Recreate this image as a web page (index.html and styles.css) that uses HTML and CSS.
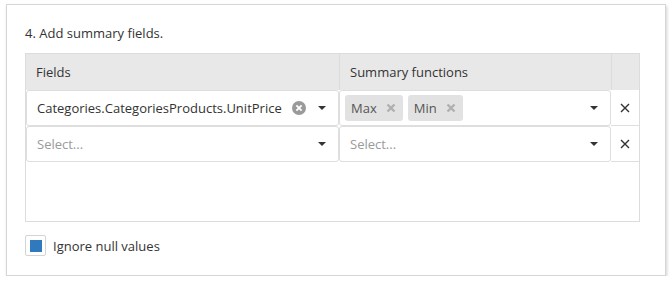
FILE: index.html
```html
<!DOCTYPE html>
<html lang="en">
<head>
    <meta charset="UTF-8">
    <title>Add summary fields</title>
    <link rel="stylesheet" href="styles.css">
</head>
<body>
    <div class="card">
        <div class="step-title">4. Add summary fields.</div>

        <div class="grid">
            <div class="grid-head">
                <div class="head-cell">Fields</div>
                <div class="head-cell">Summary functions</div>
                <div class="head-cell"></div>
            </div>

            <div class="grid-row">
                <div class="editor">
                    <span class="value">Categories.CategoriesProducts.UnitPrice</span>
                    <span class="clear-btn">
                        <svg width="14" height="14" viewBox="0 0 14 14"><circle cx="7" cy="7" r="7" fill="#9a9a9a"/><path d="M4.4 4.4 L9.6 9.6 M9.6 4.4 L4.4 9.6" stroke="#fff" stroke-width="1.8"/></svg>
                    </span>
                    <span class="caret"></span>
                </div>
                <div class="editor tags">
                    <span class="tag">Max <svg class="tag-x" width="10" height="10" viewBox="0 0 10 10"><path d="M1.5 1.5 L8.5 8.5 M8.5 1.5 L1.5 8.5" stroke="#b0b0b0" stroke-width="2.4"/></svg></span>
                    <span class="tag">Min <svg class="tag-x" width="10" height="10" viewBox="0 0 10 10"><path d="M1.5 1.5 L8.5 8.5 M8.5 1.5 L1.5 8.5" stroke="#b0b0b0" stroke-width="2.4"/></svg></span>
                    <span class="spacer"></span>
                    <span class="caret"></span>
                </div>
                <div class="remove-cell">
                    <svg width="10" height="10" viewBox="0 0 10 10"><path d="M1 1 L9 9 M9 1 L1 9" stroke="#333" stroke-width="1.4"/></svg>
                </div>
            </div>

            <div class="grid-row">
                <div class="editor">
                    <span class="placeholder">Select...</span>
                    <span class="caret"></span>
                </div>
                <div class="editor">
                    <span class="placeholder">Select...</span>
                    <span class="caret"></span>
                </div>
                <div class="remove-cell">
                    <svg width="10" height="10" viewBox="0 0 10 10"><path d="M1 1 L9 9 M9 1 L1 9" stroke="#333" stroke-width="1.4"/></svg>
                </div>
            </div>

            <div class="grid-empty"></div>
        </div>

        <label class="check">
            <span class="check-box"><span class="check-mark"></span></span>
            Ignore null values
        </label>
    </div>
</body>
</html>
```

FILE: styles.css
```css
body {
    margin: 0;
    padding: 0;
    background: #fff;
    font-family: 'Open Sans', 'Noto Sans', Arial, sans-serif;
    font-size: 13px;
    color: #333;
}

.card {
    margin: 4px 0 0 6px;
    width: 660px;
    height: 272px;
    box-sizing: border-box;
    border: 1px solid #d6d6d6;
    box-shadow: 1px 2px 3px rgba(0,0,0,0.18);
    padding: 19px 24px 0 18px;
}

.step-title {
    line-height: 18px;
    margin-bottom: 11px;
}

.grid {
    border: 1px solid #dcdcdc;
    width: 615px;
    box-sizing: border-box;
}

.grid-head,
.grid-row {
    display: grid;
    grid-template-columns: 313px 272px 28px;
}

.grid-head {
    background: #e8e8e8;
    height: 36px;
}

.head-cell {
    display: flex;
    align-items: center;
    padding-left: 10px;
    border-left: 1px solid #dcdcdc;
}

.head-cell:first-child {
    border-left: none;
}

.grid-row {
    height: 36px;
}

.editor {
    display: flex;
    align-items: center;
    padding: 0 10px;
    border: 1px solid #dedede;
    border-radius: 3px;
    background: #fff;
    min-width: 0;
}

.editor .value,
.editor .placeholder {
    flex: 1;
    white-space: nowrap;
}

.placeholder {
    color: #9a9a9a;
}

.clear-btn {
    display: flex;
    margin: 0 12px 0 8px;
}

.caret {
    width: 0;
    height: 0;
    border-left: 4px solid transparent;
    border-right: 4px solid transparent;
    border-top: 4px solid #333;
    margin-right: 2px;
}

.tags {
    padding-left: 5px;
    gap: 5px;
}

.spacer {
    flex: 1;
}

.tag {
    display: flex;
    align-items: center;
    gap: 9px;
    height: 26px;
    padding: 0 7px 0 6px;
    background: #e2e2e2;
    border-radius: 3px;
    color: #555;
}

.remove-cell {
    display: flex;
    align-items: center;
    justify-content: center;
    border-bottom: 1px solid #dedede;
}

.grid-empty {
    height: 59px;
}

.check {
    display: flex;
    align-items: center;
    gap: 7px;
    margin-top: 13px;
}

.check-box {
    width: 21px;
    height: 21px;
    box-sizing: border-box;
    border: 1px solid #d4d4d4;
    border-radius: 2px;
    display: flex;
    align-items: center;
    justify-content: center;
}

.check-mark {
    width: 12px;
    height: 12px;
    background: #3079bd;
}
```
